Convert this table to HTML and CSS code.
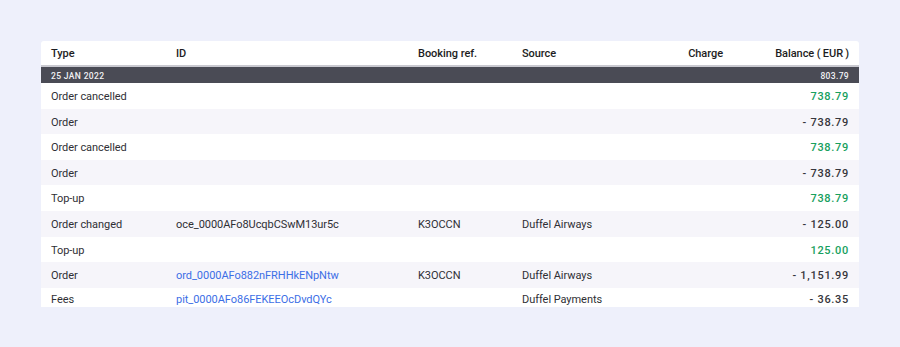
FILE: index.html
```html
<!DOCTYPE html>
<html lang="en">
<head>
<meta charset="utf-8">
<link rel="stylesheet" href="styles.css">
</head>
<body>
<div class="card">
  <table class="ledger">
    <colgroup>
      <col class="c-type"><col class="c-id"><col class="c-ref"><col class="c-src"><col class="c-charge"><col class="c-bal">
    </colgroup>
    <thead>
      <tr>
        <th>Type</th><th>ID</th><th>Booking ref.</th><th>Source</th><th class="num">Charge</th><th class="num">Balance (&#8201;EUR&#8201;)</th>
      </tr>
    </thead>
    <tbody>
      <tr class="date-row"><td colspan="5">25 JAN 2022</td><td class="num">803.79</td></tr>
      <tr><td>Order cancelled</td><td></td><td></td><td></td><td></td><td class="num amt pos">738.79</td></tr>
      <tr class="alt"><td>Order</td><td></td><td></td><td></td><td></td><td class="num amt">- 738.79</td></tr>
      <tr><td>Order cancelled</td><td></td><td></td><td></td><td></td><td class="num amt pos">738.79</td></tr>
      <tr class="alt"><td>Order</td><td></td><td></td><td></td><td></td><td class="num amt">- 738.79</td></tr>
      <tr><td>Top-up</td><td></td><td></td><td></td><td></td><td class="num amt pos">738.79</td></tr>
      <tr class="alt"><td>Order changed</td><td>oce_0000AFo8UcqbCSwM13ur5c</td><td>K3OCCN</td><td>Duffel Airways</td><td></td><td class="num amt">- 125.00</td></tr>
      <tr><td>Top-up</td><td></td><td></td><td></td><td></td><td class="num amt pos">125.00</td></tr>
      <tr class="alt"><td>Order</td><td><a class="link">ord_0000AFo882nFRHHkENpNtw</a></td><td>K3OCCN</td><td>Duffel Airways</td><td></td><td class="num amt">- 1,151.99</td></tr>
      <tr class="last"><td>Fees</td><td><a class="link">pit_0000AFo86FEKEEOcDvdQYc</a></td><td></td><td>Duffel Payments</td><td></td><td class="num amt">- 36.35</td></tr>
    </tbody>
  </table>
</div>
</body>
</html>
```

FILE: styles.css
```css
html, body {
  margin: 0;
  padding: 0;
  background: #eef0fb;
}
body {
  padding: 41px 41px 0 41px;
  font-family: Roboto, "Liberation Sans", Arial, sans-serif;
}
.card {
  width: 818px;
  height: 266px;
  overflow: hidden;
  background: #ffffff;
  border-radius: 3px 3px 0 0;
}
.ledger {
  width: 818px;
  border-collapse: collapse;
  table-layout: fixed;
}
.c-type { width: 125px; }
.c-id { width: 242px; }
.c-ref { width: 104px; }
.c-src { width: 140px; }
.c-charge { width: 81px; }
.c-bal { width: 126px; }
th, td {
  padding: 0 10px;
  text-align: left;
  white-space: nowrap;
  overflow: hidden;
}
th {
  height: 23px;
  padding-top: 1px;
  font-size: 11px;
  font-weight: 500;
  color: #1d1d22;
  border-bottom: 2px solid #c9c9d0;
  letter-spacing: -0.05px;
}
td {
  height: 24.1px;
  padding-top: 1.5px;
  font-size: 11px;
  color: #2f2f35;
  letter-spacing: -0.05px;
}
.last td {
  vertical-align: top;
  height: 18px;
  padding-top: 5.5px;
}
.num { text-align: right; }
.amt {
  letter-spacing: 0.7px;
  font-weight: 500;
  color: #36363c;
}
.date-row td {
  height: 15px;
  padding-top: 1px;
  background: #4a4b55;
  color: #f1f1f4;
  font-size: 8.5px;
  font-weight: 500;
  letter-spacing: 0.35px;
}
.alt td { background: #f6f5fa; }
.amt.pos { color: #17a05e; }
.link { color: #3c6ee6; text-decoration: none; }
```
